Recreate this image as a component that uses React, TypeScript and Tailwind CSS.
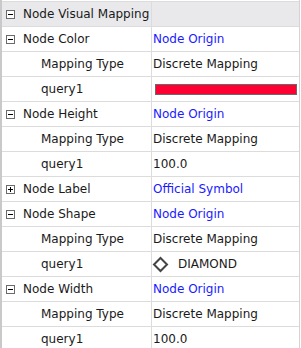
import React from "react";

type Row = {
  label: string;
  level: 0 | 1 | 2;
  toggle?: "minus" | "plus";
  value?: React.ReactNode;
  header?: boolean;
};

function ToggleBox({ kind }: { kind: "minus" | "plus" }) {
  return (
    <span className="relative inline-block w-[9px] h-[9px] border border-[#6b6b6b] bg-white shrink-0">
      <span className="absolute left-[1px] top-[3px] w-[5px] h-px bg-black" />
      {kind === "plus" && <span className="absolute left-[3px] top-[1px] w-px h-[5px] bg-black" />}
    </span>
  );
}

const blue = (t: string) => <span className="text-[#1a1aff]">{t}</span>;

const rows: Row[] = [
  { label: "Node Visual Mapping", level: 0, toggle: "minus", header: true },
  { label: "Node Color", level: 1, toggle: "minus", value: blue("Node Origin") },
  { label: "Mapping Type", level: 2, value: "Discrete Mapping" },
  {
    label: "query1",
    level: 2,
    value: <div className="w-[142px] h-[11px] ml-[2px] bg-[#ff0033] border border-[#6a6a6a]" />,
  },
  { label: "Node Height", level: 1, toggle: "minus", value: blue("Node Origin") },
  { label: "Mapping Type", level: 2, value: "Discrete Mapping" },
  { label: "query1", level: 2, value: "100.0" },
  { label: "Node Label", level: 1, toggle: "plus", value: blue("Official Symbol") },
  { label: "Node Shape", level: 1, toggle: "minus", value: blue("Node Origin") },
  { label: "Mapping Type", level: 2, value: "Discrete Mapping" },
  {
    label: "query1",
    level: 2,
    value: (
      <span className="flex items-center gap-[9px]">
        <svg width="17" height="17" viewBox="0 0 17 17" className="-ml-px">
          <path d="M8.5 2 L15 8.5 L8.5 15 L2 8.5 Z" fill="none" stroke="#444" strokeWidth="2" />
        </svg>
        <span>DIAMOND</span>
      </span>
    ),
  },
  { label: "Node Width", level: 1, toggle: "minus", value: blue("Node Origin") },
  { label: "Mapping Type", level: 2, value: "Discrete Mapping" },
  { label: "query1", level: 2, value: "100.0" },
];

export default function App() {
  return (
    <div
      className="w-[301px] h-[348px] bg-white flex overflow-hidden text-[12px] text-[#1a1a1a]"
      style={{ fontFamily: '"DejaVu Sans", sans-serif' }}
    >
      <div className="w-[2px] bg-[#c9c9c9] shrink-0" />
      <div className="w-[298px] border-r border-[#d4d4d4] pt-px">
        <div className="border-t border-[#dcdcdc]">
          {rows.map((r, i) => (
            <div
              key={i}
              className={`flex h-[25px] border-b border-[#dcdcdc] ${r.header ? "bg-[#e9e9ec]" : ""}`}
            >
              <div className="w-[150px] shrink-0 border-r border-[#dcdcdc] flex items-center">
                {r.level === 2 ? (
                  <span className="pl-[39px]">{r.label}</span>
                ) : (
                  <span className="flex items-center pl-[4px]">
                    <ToggleBox kind={r.toggle ?? "minus"} />
                    <span className="pl-[8px]">{r.label}</span>
                  </span>
                )}
              </div>
              <div className="flex-1 flex items-center pl-px">{r.value}</div>
            </div>
          ))}
        </div>
      </div>
    </div>
  );
}
